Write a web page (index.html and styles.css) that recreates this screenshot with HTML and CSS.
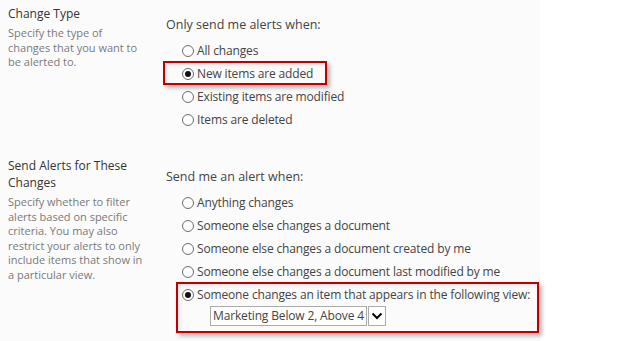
FILE: index.html
```html
<!DOCTYPE html>
<html lang="en">
<head>
  <meta charset="UTF-8">
  <title>Alert settings</title>
  <link rel="stylesheet" href="styles.css">
</head>
<body>
  <div class="panel">
    <!-- Tipo de alteração -->
    <section class="row">
      <div class="label">
        <h3>Change Type</h3>
        <p>Specify the type of changes that you want to be alerted to.</p>
      </div>
      <div class="field">
        <div class="prompt">Only send me alerts when:</div>
        <ul class="options">
          <li><span class="radio"></span>All changes</li>
          <li class="mark mark-one"><span class="radio on"></span>New items are added</li>
          <li><span class="radio"></span>Existing items are modified</li>
          <li><span class="radio"></span>Items are deleted</li>
        </ul>
      </div>
    </section>

    <!-- Filtro dos alertas -->
    <section class="row second">
      <div class="label">
        <h3>Send Alerts for These Changes</h3>
        <p>Specify whether to filter alerts based on specific criteria. You may also restrict your alerts to only include items that show in a particular view.</p>
      </div>
      <div class="field">
        <div class="prompt">Send me an alert when:</div>
        <ul class="options">
          <li><span class="radio"></span>Anything changes</li>
          <li><span class="radio"></span>Someone else changes a document</li>
          <li><span class="radio"></span>Someone else changes a document created by me</li>
          <li><span class="radio"></span>Someone else changes a document last modified by me</li>
          <li class="mark mark-two">
            <div class="opt"><span class="radio on"></span>Someone changes an item that appears in the following view:</div>
            <div class="select">
              <span class="select-text">Marketing Below 2, Above 4</span>
              <span class="select-btn">
                <svg width="12" height="8" viewBox="0 0 12 8"><path d="M1.5 1.5 L6 6 L10.5 1.5" fill="none" stroke="#000" stroke-width="2"/></svg>
              </span>
            </div>
          </li>
        </ul>
      </div>
    </section>
  </div>
</body>
</html>
```

FILE: styles.css
```css
body {
  margin: 0;
  background: #fff;
  font-family: 'Open Sans', 'Noto Sans', Arial, sans-serif;
  color: #444;
  overflow: hidden;
}
.panel {
  width: 532px;
  height: 341px;
  padding: 5px 0 0 8px;
  background: #fbfbfb;
}
.row {
  display: flex;
}
.row.second {
  margin-top: 26px;
}
.label {
  width: 136px;
  flex: none;
}
.label h3 {
  margin: 0;
  font-size: 12px;
  font-weight: 400;
  line-height: 17px;
  color: #333;
}
.label p {
  margin: 4px 0 0;
  font-size: 11px;
  line-height: 14.6px;
  color: #7a7a7a;
}
.field {
  margin-left: 22px;
  padding-top: 12px;
  font-size: 12.5px;
}
.prompt {
  line-height: 16px;
  margin-bottom: 6px;
}
.options {
  list-style: none;
  margin: 0;
  padding: 0 0 0 16px;
  font-size: 12px;
  letter-spacing: -0.15px;
  white-space: nowrap;
}
.options li {
  display: flex;
  align-items: center;
  height: 23px;
}
.radio {
  width: 10px;
  height: 10px;
  border: 1px solid #6d6d6d;
  border-radius: 50%;
  background: #fdfdfd;
  margin-right: 3px;
  flex: none;
  position: relative;
}
.radio.on::after {
  content: "";
  position: absolute;
  left: 2px; top: 2px;
  width: 6px; height: 6px;
  border-radius: 50%;
  background: #111;
}
/* caixas vermelhas de destaque */
.mark {
  position: relative;
  width: fit-content;
}
.mark::after {
  content: "";
  position: absolute;
  border: 2px solid #c00000;
  box-shadow: 3px 3px 4px rgba(0,0,0,0.28), inset 2px 2px 4px rgba(0,0,0,0.08);
  pointer-events: none;
}
.mark-one::after {
  left: -19px; right: -14px;
  top: -1px; bottom: 0;
}
.options li.mark-two {
  display: block;
  height: auto;
}
.mark-two::after {
  left: -6px; right: -9px;
  top: -1px; bottom: -7px;
}
.opt {
  display: flex;
  align-items: center;
  height: 23px;
}
.select {
  display: flex;
  margin: 0 0 0 28px;
  width: fit-content;
}
.select-text {
  height: 18px;
  line-height: 18px;
  border: 1px solid #ababab;
  background: #fff;
  padding: 0 2px;
}
.select-btn {
  width: 16px;
  height: 18px;
  border: 1px solid #ababab;
  margin-left: 1px;
  background: #fff;
  display: flex;
  align-items: center;
  justify-content: center;
}
```
